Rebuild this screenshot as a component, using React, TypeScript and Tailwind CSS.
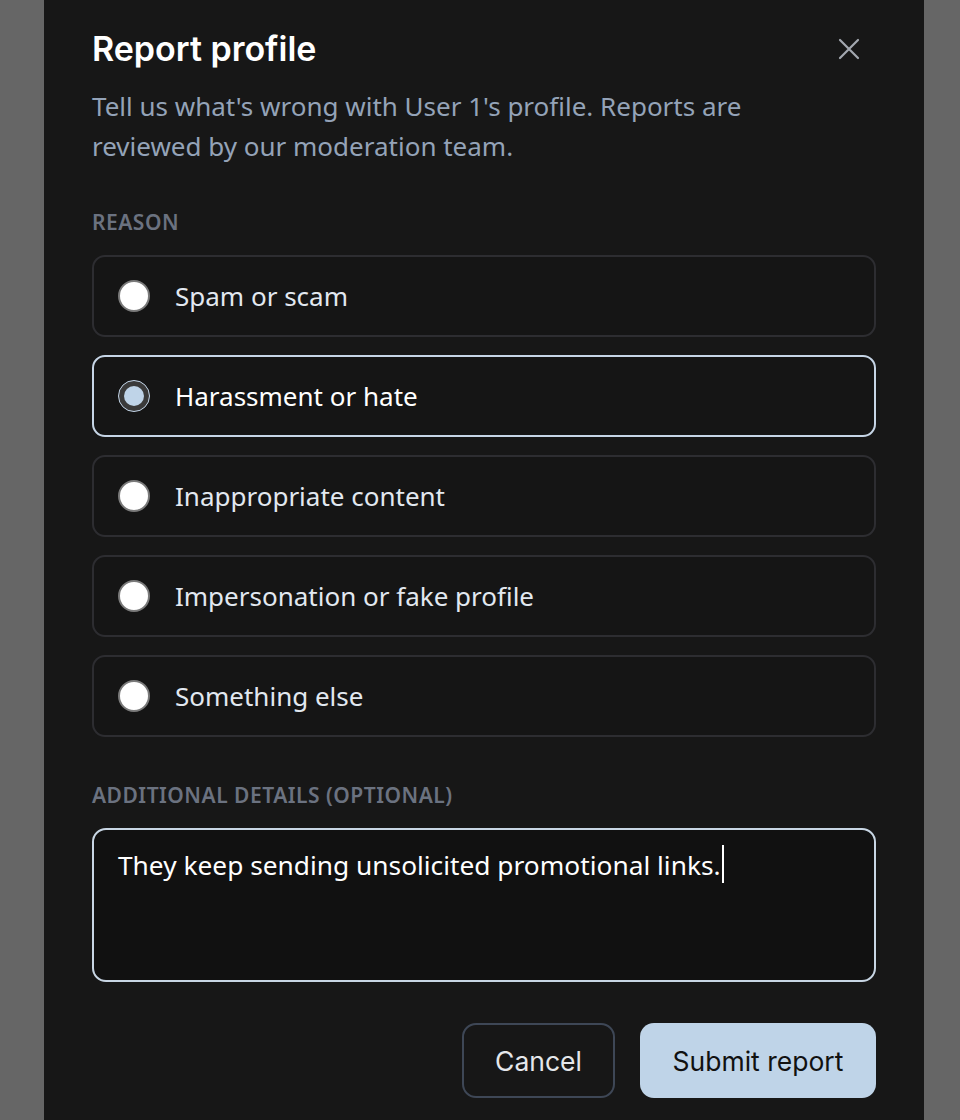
import React, { useState } from "react";

const reasons = [
  "Spam or scam",
  "Harassment or hate",
  "Inappropriate content",
  "Impersonation or fake profile",
  "Something else",
];

const body = { fontFamily: '"Noto Sans", "Open Sans", sans-serif' };
const display = { fontFamily: 'Inter, "Noto Sans", sans-serif' };

function Radio({ checked }: { checked: boolean }) {
  if (checked) {
    return (
      <span className="flex h-[32px] w-[32px] shrink-0 items-center justify-center rounded-full border-[1.5px] border-[#c3d5e8] bg-[#3a3a3a]">
        <span className="h-[20px] w-[20px] rounded-full bg-[#bfd4e8]" />
      </span>
    );
  }
  return <span className="h-[32px] w-[32px] shrink-0 rounded-full border-[2px] border-[#7a7a7a] bg-white" />;
}

export default function App() {
  const [selected, setSelected] = useState(1);

  return (
    <div className="min-h-[1120px] w-full overflow-hidden bg-[#666666]">
      <div className="ml-[44px] flex h-[1120px] w-[880px] flex-col bg-[#171717] px-[48px] pt-[27px]">
        <div className="flex items-start justify-between">
          <h2 className="text-[34px] font-semibold leading-[44px] text-white" style={display}>
            Report profile
          </h2>
          <button className="mr-[16px] mt-[11px] text-[#a3a8b0]" aria-label="Close">
            <svg width="22" height="22" viewBox="0 0 22 22" fill="none" stroke="currentColor" strokeWidth="2.2" strokeLinecap="round">
              <path d="M2 2 L20 20 M20 2 L2 20" />
            </svg>
          </button>
        </div>

        <p className="mt-[15px] text-[26px] leading-[40px] text-[#94a3b8]" style={body}>
          Tell us what's wrong with User 1's profile. Reports are
          <br />
          reviewed by our moderation team.
        </p>

        <div className="mt-[41px] text-[21px] font-semibold uppercase leading-[30px] tracking-[0.5px] text-[#6b7280]" style={body}>
          Reason
        </div>

        <div className="mt-[18px] flex flex-col gap-[18px]">
          {reasons.map((r, i) => {
            const on = i === selected;
            return (
              <button
                key={r}
                onClick={() => setSelected(i)}
                className={
                  on
                    ? "flex h-[82px] items-center gap-[25px] rounded-[13px] border-2 border-[#c6d5e6] bg-[#151515] pl-[24px] text-left"
                    : "flex h-[82px] items-center gap-[25px] rounded-[13px] border-2 border-[#2d2d31] bg-[#151515] pl-[24px] text-left"
                }
              >
                <Radio checked={on} />
                <span
                  className={on ? "text-[26px] leading-[36px] text-white" : "text-[26px] leading-[36px] text-[#e2e8f0]"}
                  style={body}
                >
                  {r}
                </span>
              </button>
            );
          })}
        </div>

        <div className="mt-[43px] text-[21px] font-semibold uppercase leading-[30px] tracking-[0.5px] text-[#6b7280]" style={body}>
          Additional details (optional)
        </div>

        <div className="mt-[18px] h-[154px] rounded-[14px] border-2 border-[#c8d6e4] bg-[#111111] px-[24px] pt-[7px]">
          <span className="text-[26.3px] leading-[36px] text-white" style={body}>
            They keep sending unsolicited promotional links.
          </span>
          <span className="ml-[1px] inline-block h-[38px] w-[2px] translate-y-[8px] bg-white" />
        </div>

        <div className="mt-[41px] flex justify-end gap-[25px]">
          <button
            className="h-[75px] w-[153px] rounded-[14px] border-2 border-[#3e4756] pt-[3px] text-[26.5px] text-[#e5e7eb]"
            style={display}
          >
            Cancel
          </button>
          <button
            className="h-[75px] w-[236px] rounded-[14px] bg-[#bfd4e8] pt-[3px] text-[26.5px] text-[#111111]"
            style={display}
          >
            Submit report
          </button>
        </div>
      </div>
    </div>
  );
}
